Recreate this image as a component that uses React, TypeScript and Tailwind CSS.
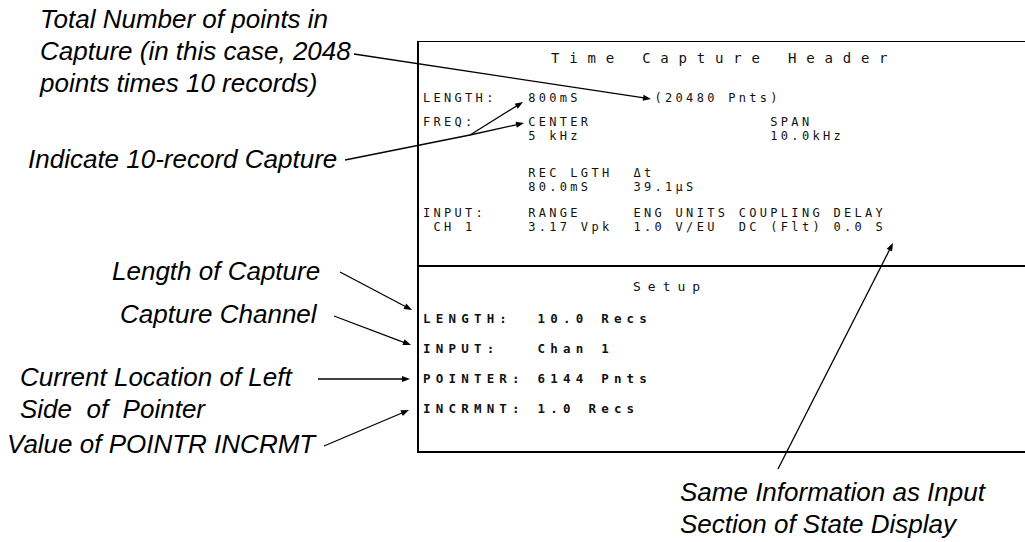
const notes = [
  { lines: ["Total Number of points in", "Capture (in this case, 2048", "points times 10 records)"], cls: "left-[40px] top-[3px]" },
  { lines: ["Indicate 10-record Capture"], cls: "left-[28px] top-[143px]" },
  { lines: ["Length of Capture"], cls: "left-[112px] top-[255px]" },
  { lines: ["Capture Channel"], cls: "left-[120px] top-[298px]" },
  { lines: ["Current Location of Left", "Side  of  Pointer"], cls: "left-[20px] top-[361px]" },
  { lines: ["Value of POINTR INCRMT"], cls: "left-[7px] top-[428px]" },
  { lines: ["Same Information as Input", "Section of State Display"], cls: "left-[680px] top-[476px]" },
];

const header = [
  ["LENGTH:   800mS       (20480 Pnts)"],
  ["FREQ:     CENTER                 SPAN", "          5 kHz                  10.0kHz"],
  ["          REC LGTH  \u0394t", "          80.0mS    39.1\u03bcS"],
  ["INPUT:    RANGE     ENG UNITS COUPLING DELAY", " CH 1     3.17 Vpk  1.0 V/EU  DC (Flt) 0.0 S"],
];

const setup = ["LENGTH:  10.0 Recs", "INPUT:   Chan 1", "POINTER: 6144 Pnts", "INCRMNT: 1.0 Recs"];

function Arrow({ x1, y1, x2, y2, head = true }: { x1: number; y1: number; x2: number; y2: number; head?: boolean }) {
  const a = Math.atan2(y2 - y1, x2 - x1);
  const L = 8;
  const w = 3;
  const c = Math.cos(a);
  const s = Math.sin(a);
  const ex = head ? x2 - (L - 1) * c : x2;
  const ey = head ? y2 - (L - 1) * s : y2;
  const pts = `${x2},${y2} ${x2 - L * c + w * s},${y2 - L * s - w * c} ${x2 - L * c - w * s},${y2 - L * s + w * c}`;
  return (
    <g>
      <line x1={x1} y1={y1} x2={ex} y2={ey} stroke="#000" strokeWidth={1.3} />
      {head && <polygon points={pts} fill="#000" />}
    </g>
  );
}

export default function App() {
  return (
    <div className="relative w-[1025px] h-[542px] overflow-hidden bg-white text-black pt-[41px] pl-[417px]">
      <div className="w-[620px] border-l-2 border-t-[1.5px] border-black font-['DejaVu_Sans_Mono',monospace] text-[#111]">
        {/* header block */}
        <div className="h-[225px] border-b-2 border-black pl-[4px]">
          <div className="pt-[8px] pl-[128px] text-[14px] leading-[16px] tracking-[9.8px] whitespace-pre">Time Capture Header</div>
          <div className="mt-[25px] text-[12px] leading-[14px] tracking-[3.3px] whitespace-pre">{header[0][0]}</div>
          <div className="mt-[10px] text-[12px] leading-[14px] tracking-[3.3px] whitespace-pre">
            {header[1].map((l) => (
              <div key={l}>{l}</div>
            ))}
          </div>
          <div className="mt-[23px] text-[12px] leading-[14px] tracking-[3.3px] whitespace-pre">
            {header[2].map((l) => (
              <div key={l}>{l}</div>
            ))}
          </div>
          <div className="mt-[12px] text-[12px] leading-[14px] tracking-[3.3px] whitespace-pre">
            {header[3].map((l) => (
              <div key={l}>{l}</div>
            ))}
          </div>
        </div>
        {/* setup block */}
        <div className="h-[186px] border-b-2 border-black pl-[4px]">
          <div className="pt-[12px] pl-[210px] text-[13px] leading-[16px] tracking-[7px] whitespace-pre">Setup</div>
          <div className="mt-[16px] flex flex-col gap-[14px] text-[12.5px] leading-[16px] tracking-[5.2px] font-bold whitespace-pre">
            {setup.map((l) => (
              <div key={l}>{l}</div>
            ))}
          </div>
        </div>
      </div>

      {notes.map((n) => (
        <div
          key={n.lines[0]}
          className={`absolute ${n.cls} font-['Liberation_Sans',Arial,sans-serif] italic text-[26px] leading-[32px] whitespace-pre`}
        >
          {n.lines.map((l) => (
            <div key={l}>{l}</div>
          ))}
        </div>
      ))}

      <svg className="absolute inset-0 pointer-events-none" width="1025" height="542">
        <Arrow x1={354} y1={54} x2={651} y2={99} />
        <Arrow x1={345} y1={160} x2={470} y2={135} head={false} />
        <Arrow x1={470} y1={135} x2={524} y2={123} />
        <Arrow x1={470} y1={135} x2={523} y2={102} />
        <Arrow x1={340} y1={272} x2={412} y2={310} />
        <Arrow x1={334} y1={316} x2={411} y2={345} />
        <Arrow x1={318} y1={379} x2={410} y2={379} />
        <Arrow x1={324} y1={446} x2={409} y2={410} />
        <Arrow x1={778} y1={469} x2={893} y2={243} />
      </svg>
    </div>
  );
}
